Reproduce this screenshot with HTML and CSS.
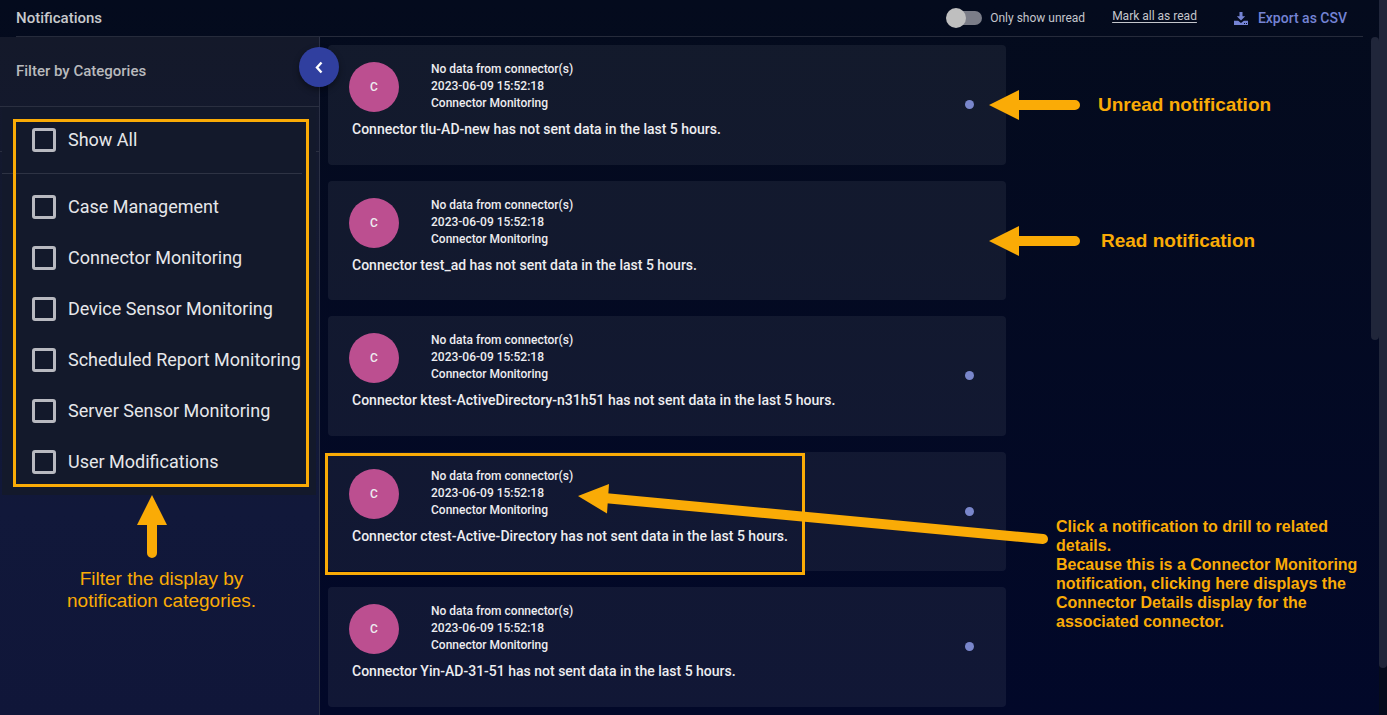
FILE: index.html
```html
<!DOCTYPE html>
<html lang="en">
<head>
<meta charset="utf-8">
<title>Notifications</title>
<link rel="stylesheet" href="styles.css">
</head>
<body>
<div class="app">
  <header class="topbar">
    <h1 class="title">Notifications</h1>
    <label class="unread-toggle"><input type="checkbox" class="switch" role="switch"><span>Only show unread</span></label>
    <a class="mark-read" href="#">Mark all as read</a>
    <button type="button" class="export">
      <svg class="export-icon" viewBox="0 0 14 13" aria-hidden="true"><path d="M5.500 0h3v4.200h2.700L7 8.600 2.800 4.200h2.700zM0 8.800h4.200L7 11l2.800-2.200H14V13H0zM10 11v1h1v-1zM12 11v1h1v-1z" fill="currentColor" fill-rule="evenodd"/></svg>
      <span>Export as CSV</span>
    </button>
  </header>

  <div class="body">
    <aside class="sidebar">
      <h2 class="filter-title">Filter by Categories</h2>
      <button type="button" class="collapse" aria-label="Collapse filters">
        <svg class="chevron" viewBox="0 0 10 14" aria-hidden="true"><path d="M7.500 2.500 3 7.500l4.500 5" fill="none" stroke="currentColor" stroke-width="2.400"/></svg>
      </button>
      <div class="filters">
        <label class="filter filter-all"><input type="checkbox" class="box"><span>Show All</span></label>
        <label class="filter"><input type="checkbox" class="box"><span>Case Management</span></label>
        <label class="filter"><input type="checkbox" class="box"><span>Connector Monitoring</span></label>
        <label class="filter"><input type="checkbox" class="box"><span>Device Sensor Monitoring</span></label>
        <label class="filter"><input type="checkbox" class="box"><span>Scheduled Report Monitoring</span></label>
        <label class="filter"><input type="checkbox" class="box"><span>Server Sensor Monitoring</span></label>
        <label class="filter"><input type="checkbox" class="box"><span>User Modifications</span></label>
      </div>
    </aside>

    <main class="list">
      <article class="card">
        <div class="card-head"><span class="avatar">C</span><div class="meta"><p>No data from connector(s)</p><p>2023-06-09 15:52:18</p><p>Connector Monitoring</p></div></div>
        <p class="message">Connector tlu-AD-new has not sent data in the last 5 hours.</p>
        <span class="dot"></span>
      </article>
      <article class="card">
        <div class="card-head"><span class="avatar">C</span><div class="meta"><p>No data from connector(s)</p><p>2023-06-09 15:52:18</p><p>Connector Monitoring</p></div></div>
        <p class="message">Connector test_ad has not sent data in the last 5 hours.</p>
      </article>
      <article class="card">
        <div class="card-head"><span class="avatar">C</span><div class="meta"><p>No data from connector(s)</p><p>2023-06-09 15:52:18</p><p>Connector Monitoring</p></div></div>
        <p class="message">Connector ktest-ActiveDirectory-n31h51 has not sent data in the last 5 hours.</p>
        <span class="dot"></span>
      </article>
      <article class="card">
        <div class="card-head"><span class="avatar">C</span><div class="meta"><p>No data from connector(s)</p><p>2023-06-09 15:52:18</p><p>Connector Monitoring</p></div></div>
        <p class="message">Connector ctest-Active-Directory has not sent data in the last 5 hours.</p>
        <span class="dot"></span>
      </article>
      <article class="card">
        <div class="card-head"><span class="avatar">C</span><div class="meta"><p>No data from connector(s)</p><p>2023-06-09 15:52:18</p><p>Connector Monitoring</p></div></div>
        <p class="message">Connector Yin-AD-31-51 has not sent data in the last 5 hours.</p>
        <span class="dot"></span>
      </article>
    </main>
  </div>

  <div class="scroll scroll-inner"></div>
  <div class="scroll-track"></div>
  <div class="scroll scroll-outer"></div>

  <svg class="arrows" width="1387" height="715" viewBox="0 0 1387 715" aria-hidden="true">
    <g fill="none" stroke="#faab06">
      <rect x="14.500" y="120.500" width="293" height="365" stroke-width="3"/>
      <rect x="326.500" y="454.500" width="477" height="119" stroke-width="3"/>
      <g stroke-width="10" stroke-linecap="round">
        <path d="M1015 105h60M1015 241h60M152 520v33M604 498l439 41"/>
      </g>
    </g>
    <path d="M989 105l30-15v30zM989 241l30-15v30zM152 495l15 30h-30zM578 496l31-12-2 29.500z" fill="#faab06"/>
  </svg>
  <p class="note note-unread">Unread notification</p>
  <p class="note note-read">Read notification</p>
  <p class="note note-filter">Filter the display by<br>notification categories.</p>
  <p class="note note-drill">Click a notification to drill to related<br>details.<br>Because this is a Connector Monitoring<br>notification, clicking here displays the<br>Connector Details display for the<br>associated connector.</p>
</div>
</body>
</html>
```

FILE: styles.css
```css
* { box-sizing: border-box; }

body {
  margin: 0;
  background: #030923;
  font-family: Roboto, "Liberation Sans", sans-serif;
  color: #ededf0;
}

h1, h2, p { margin: 0; }

button {
  border: 0;
  padding: 0;
  background: none;
  font: inherit;
  color: inherit;
}

.app {
  position: relative;
  display: flex;
  flex-direction: column;
  height: 100vh;
  overflow: hidden;
  background: linear-gradient(#040b1d, #020829);
}

/* Top bar */
.topbar {
  display: flex;
  align-items: center;
  height: 37px;
  margin: 0 24px 0 16px;
  padding-right: 16px;
  border-bottom: 1px solid #262b3b;
}

.title {
  margin-right: auto;
  font-size: 15px;
  font-weight: 500;
  color: #c8c9cc;
}

.unread-toggle {
  display: flex;
  align-items: center;
  gap: 8px;
  margin-right: 27px;
  font-size: 12px;
  color: #c4c6cc;
}

.switch {
  appearance: none;
  position: relative;
  width: 34px;
  height: 14px;
  margin: 0;
  border-radius: 7px;
  background: #7b7d88;
}

.switch::before {
  content: "";
  position: absolute;
  left: -2px;
  top: -3px;
  width: 20px;
  height: 20px;
  border-radius: 50%;
  background: #bfbfbf;
}

.mark-read {
  margin-right: 37px;
  padding-bottom: 4px;
  font-size: 12px;
  color: #c4c6cc;
  text-underline-offset: 2px;
}

.export {
  display: flex;
  align-items: center;
  gap: 10px;
  font-size: 14px;
  font-weight: 500;
  color: #7483d4;
}

.export-icon { width: 14px; height: 13px; }

/* Filters */
.body {
  display: flex;
  flex: 1;
  min-height: 0;
}

.sidebar {
  position: relative;
  z-index: 1;
  flex: none;
  width: 320px;
  border-right: 1px solid #2b3044;
  background:
    linear-gradient(#2a2f40, #2a2f40) 0 114px / 100% 1px no-repeat,
    linear-gradient(#14192a, #11183a 70%, #101639);
}

.filter-title {
  height: 70px;
  padding-left: 16px;
  border-bottom: 1px solid #2a2f40;
  font-size: 15px;
  font-weight: 500;
  line-height: 68px;
  color: #b9babd;
}

.collapse {
  position: absolute;
  top: 10px;
  right: -20px;
  display: grid;
  place-items: center;
  width: 40px;
  height: 40px;
  border-radius: 50%;
  background: #303f9f;
  color: #fff;
  box-shadow: 0 3px 6px rgba(0, 0, 0, 0.4);
}

.chevron { width: 10px; height: 14px; }

.filters {
  margin: 0 3px 0 2px;
  padding-bottom: 8px;
  background: #13192b;
}

.filter {
  display: flex;
  align-items: center;
  gap: 12px;
  height: 51px;
  padding-left: 30px;
  font-size: 18px;
  line-height: 22px;
  color: #e6e7ea;
  white-space: nowrap;
}

.filter-all {
  height: 67px;
  margin: 0 14px 7px 0;
  border-bottom: 1px solid #2e3344;
}

.box {
  appearance: none;
  flex: none;
  width: 24px;
  height: 24px;
  margin: 0;
  border: 3px solid #b8b9c0;
  border-radius: 3px;
}

/* Notification cards */
.list {
  display: grid;
  flex: 0 1 694px;
  grid-auto-rows: 120px 119px;
  align-content: start;
  gap: 16px;
  padding: 8px;
}

.card {
  position: relative;
  padding: 16px 21px;
  border-radius: 4px;
  background: rgba(255, 255, 255, 0.063);
  font-weight: 500;
}

.card-head {
  display: flex;
  align-items: center;
  gap: 32px;
}

.avatar {
  display: grid;
  place-items: center;
  width: 50px;
  height: 50px;
  border-radius: 50%;
  background: #bc4f90;
  font-size: 12px;
}

.meta {
  font-size: 12px;
  line-height: 17px;
}

.message {
  margin-top: 8px;
  padding-left: 3px;
  font-size: 14px;
  line-height: 18px;
}

.dot {
  position: absolute;
  right: 32px;
  top: 55px;
  width: 9px;
  height: 9px;
  border-radius: 50%;
  background: #7986cb;
}

/* Scrollbars */
.scroll {
  position: absolute;
  width: 8px;
  background: #20263a;
}

.scroll-inner {
  right: 8px;
  top: 37px;
  height: 303px;
  border-radius: 4px;
}

.scroll-track {
  position: absolute;
  right: 0;
  top: 0;
  bottom: 0;
  width: 8px;
  background: #050b1c;
}

.scroll-outer {
  right: 0;
  top: 0;
  height: 668px;
  border-radius: 0 0 4px 4px;
}

/* Callouts */
.arrows {
  position: absolute;
  z-index: 2;
  left: 0;
  top: 0;
  pointer-events: none;
}

.note {
  position: absolute;
  z-index: 2;
  font-family: "Liberation Sans", Arial, sans-serif;
  font-weight: 700;
  color: #faab06;
  white-space: nowrap;
}

.note-unread, .note-read {
  font-size: 19px;
  line-height: 22px;
}

.note-unread { left: 1098px; top: 94px; }

.note-read { left: 1101px; top: 230px; }

.note-filter {
  left: 67px;
  top: 568px;
  font-size: 19px;
  font-weight: 400;
  line-height: 22px;
  text-align: center;
}

.note-drill {
  left: 1056px;
  top: 517px;
  font-size: 16px;
  line-height: 19px;
}
```
